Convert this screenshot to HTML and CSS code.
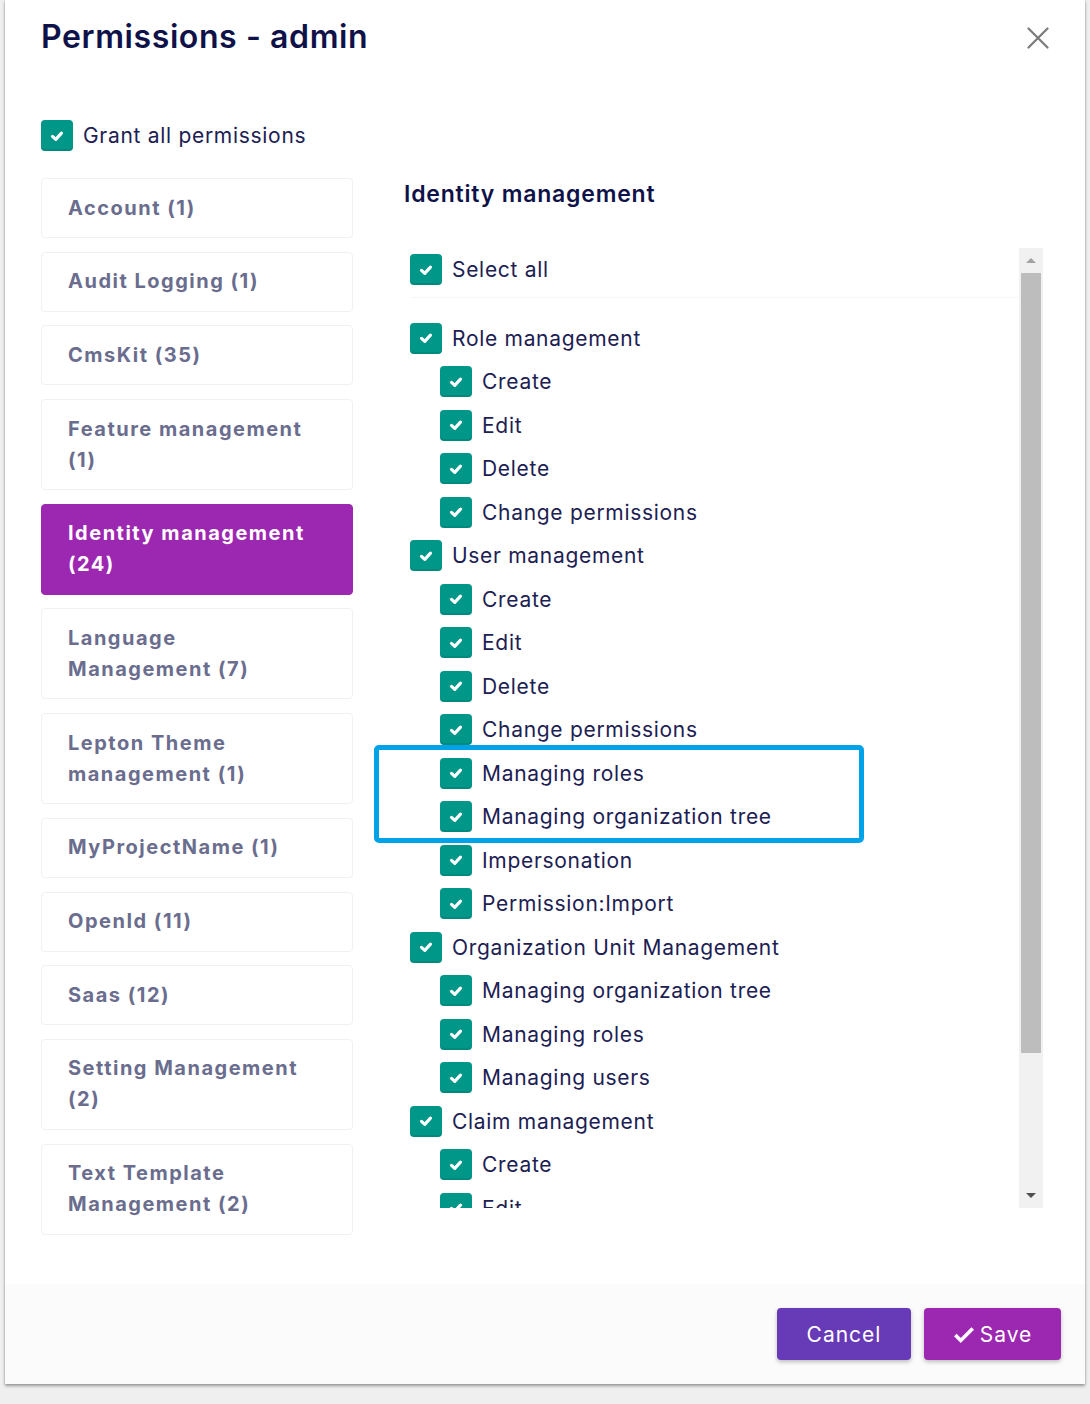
FILE: index.html
```html
<!DOCTYPE html>
<html lang="en">
<head>
<meta charset="utf-8">
<title>Permissions - admin</title>
<link rel="stylesheet" href="styles.css">
</head>
<body>
<div class="modal">
  <div class="modal-header">
    <h1 class="title">Permissions - admin</h1>
    <button class="close" aria-label="Close">
      <svg width="22" height="22" viewBox="0 0 22 22"><path d="M1.5 1.5 L20.5 20.5 M20.5 1.5 L1.5 20.5" stroke="#7a7a7a" stroke-width="2.2" fill="none" stroke-linecap="round"/></svg>
    </button>
  </div>
  <div class="modal-body">
    <label class="row grant"><span class="cb"><svg viewBox="0 0 16 16"><path d="M4 8.3 L6.9 11 L12 5.4" /></svg></span><span class="lbl">Grant all permissions</span></label>
    <div class="columns">
      <nav class="nav">
        <a class="nav-item">Account (1)</a>
        <a class="nav-item">Audit Logging (1)</a>
        <a class="nav-item">CmsKit (35)</a>
        <a class="nav-item">Feature management (1)</a>
        <a class="nav-item active">Identity management (24)</a>
        <a class="nav-item">Language Management (7)</a>
        <a class="nav-item">Lepton Theme management (1)</a>
        <a class="nav-item">MyProjectName (1)</a>
        <a class="nav-item">OpenId (11)</a>
        <a class="nav-item">Saas (12)</a>
        <a class="nav-item">Setting Management (2)</a>
        <a class="nav-item">Text Template Management (2)</a>
      </nav>
      <section class="panel">
        <h2 class="panel-title">Identity management</h2>
        <div class="scroll-box">
          <div class="list">
            <label class="row"><span class="cb"><svg viewBox="0 0 16 16"><path d="M4 8.3 L6.9 11 L12 5.4" /></svg></span><span class="lbl">Select all</span></label>
            <hr class="sep">
            <label class="row"><span class="cb"><svg viewBox="0 0 16 16"><path d="M4 8.3 L6.9 11 L12 5.4" /></svg></span><span class="lbl">Role management</span></label>
            <label class="row child"><span class="cb"><svg viewBox="0 0 16 16"><path d="M4 8.3 L6.9 11 L12 5.4" /></svg></span><span class="lbl">Create</span></label>
            <label class="row child"><span class="cb"><svg viewBox="0 0 16 16"><path d="M4 8.3 L6.9 11 L12 5.4" /></svg></span><span class="lbl">Edit</span></label>
            <label class="row child"><span class="cb"><svg viewBox="0 0 16 16"><path d="M4 8.3 L6.9 11 L12 5.4" /></svg></span><span class="lbl">Delete</span></label>
            <label class="row child"><span class="cb"><svg viewBox="0 0 16 16"><path d="M4 8.3 L6.9 11 L12 5.4" /></svg></span><span class="lbl">Change permissions</span></label>
            <label class="row"><span class="cb"><svg viewBox="0 0 16 16"><path d="M4 8.3 L6.9 11 L12 5.4" /></svg></span><span class="lbl">User management</span></label>
            <label class="row child"><span class="cb"><svg viewBox="0 0 16 16"><path d="M4 8.3 L6.9 11 L12 5.4" /></svg></span><span class="lbl">Create</span></label>
            <label class="row child"><span class="cb"><svg viewBox="0 0 16 16"><path d="M4 8.3 L6.9 11 L12 5.4" /></svg></span><span class="lbl">Edit</span></label>
            <label class="row child"><span class="cb"><svg viewBox="0 0 16 16"><path d="M4 8.3 L6.9 11 L12 5.4" /></svg></span><span class="lbl">Delete</span></label>
            <label class="row child"><span class="cb"><svg viewBox="0 0 16 16"><path d="M4 8.3 L6.9 11 L12 5.4" /></svg></span><span class="lbl">Change permissions</span></label>
            <label class="row child"><span class="cb"><svg viewBox="0 0 16 16"><path d="M4 8.3 L6.9 11 L12 5.4" /></svg></span><span class="lbl">Managing roles</span></label>
            <label class="row child"><span class="cb"><svg viewBox="0 0 16 16"><path d="M4 8.3 L6.9 11 L12 5.4" /></svg></span><span class="lbl">Managing organization tree</span></label>
            <label class="row child"><span class="cb"><svg viewBox="0 0 16 16"><path d="M4 8.3 L6.9 11 L12 5.4" /></svg></span><span class="lbl">Impersonation</span></label>
            <label class="row child"><span class="cb"><svg viewBox="0 0 16 16"><path d="M4 8.3 L6.9 11 L12 5.4" /></svg></span><span class="lbl">Permission:Import</span></label>
            <label class="row"><span class="cb"><svg viewBox="0 0 16 16"><path d="M4 8.3 L6.9 11 L12 5.4" /></svg></span><span class="lbl">Organization Unit Management</span></label>
            <label class="row child"><span class="cb"><svg viewBox="0 0 16 16"><path d="M4 8.3 L6.9 11 L12 5.4" /></svg></span><span class="lbl">Managing organization tree</span></label>
            <label class="row child"><span class="cb"><svg viewBox="0 0 16 16"><path d="M4 8.3 L6.9 11 L12 5.4" /></svg></span><span class="lbl">Managing roles</span></label>
            <label class="row child"><span class="cb"><svg viewBox="0 0 16 16"><path d="M4 8.3 L6.9 11 L12 5.4" /></svg></span><span class="lbl">Managing users</span></label>
            <label class="row"><span class="cb"><svg viewBox="0 0 16 16"><path d="M4 8.3 L6.9 11 L12 5.4" /></svg></span><span class="lbl">Claim management</span></label>
            <label class="row child"><span class="cb"><svg viewBox="0 0 16 16"><path d="M4 8.3 L6.9 11 L12 5.4" /></svg></span><span class="lbl">Create</span></label>
            <label class="row child"><span class="cb"><svg viewBox="0 0 16 16"><path d="M4 8.3 L6.9 11 L12 5.4" /></svg></span><span class="lbl">Edit</span></label>
          </div>
          <div class="scrollbar">
            <div class="sb-btn"><span class="arrow-up"></span></div>
            <div class="sb-track"><div class="sb-thumb"></div></div>
            <div class="sb-btn"><span class="arrow-down"></span></div>
          </div>
        </div>
      </section>
    </div>
  </div>
  <div class="modal-footer">
    <button class="btn btn-cancel">Cancel</button>
    <button class="btn btn-save"><svg class="save-check" viewBox="0 0 24 20"><path d="M2.5 10.5 L8.5 16.5 L21.5 3.5" /></svg>Save</button>
  </div>
  <div class="highlight"></div>
</div>
</body>
</html>
```
FILE: styles.css
```css
html, body {
  margin: 0;
  padding: 0;
}
body {
  background: #efefef;
  font-family: Inter, "Noto Sans", sans-serif;
  height: 1404px;
  overflow: hidden;
}
.modal {
  position: relative;
  margin-left: 5px;
  width: 1080px;
  height: 1384px;
  background: #fff;
  box-shadow: 0 2px 3px rgba(0,0,0,0.35), 0 0 2px rgba(0,0,0,0.15);
  display: flex;
  flex-direction: column;
}
.modal-header {
  display: flex;
  justify-content: space-between;
  align-items: flex-start;
  padding: 16px 36px 0 36px;
  height: 42px;
}
.title {
  margin: 0;
  font-size: 32px;
  line-height: 42px;
  font-weight: 600;
  color: #0f1249;
  letter-spacing: 0.6px;
}
.close {
  border: 0;
  background: transparent;
  padding: 0;
  margin: 11px 0 0 0;
  width: 22px;
  height: 22px;
  display: block;
}
.close svg { display: block; }
.modal-body {
  flex: 1;
  padding: 62px 42px 0 36px;
}
.row {
  display: flex;
  align-items: center;
  height: 43.5px;
  gap: 10px;
}
.row.grant {
  height: 31px;
  margin-bottom: 27px;
}
.cb {
  width: 32px;
  height: 31px;
  border-radius: 4px;
  background: #009688;
  box-shadow: inset 0 -2px 0 rgba(0,0,0,0.08);
  display: flex;
  align-items: center;
  justify-content: center;
  flex: none;
}
.cb svg {
  width: 18px;
  height: 18px;
}
.cb svg path {
  fill: none;
  stroke: #fff;
  stroke-width: 2.8;
  stroke-linecap: round;
  stroke-linejoin: round;
}
.lbl {
  font-size: 21px;
  color: #1c2052;
  letter-spacing: 0.7px;
}
.columns {
  display: flex;
  gap: 51px;
}
.nav {
  width: 312px;
  flex: none;
  display: flex;
  flex-direction: column;
  gap: 13.7px;
}
.nav-item {
  display: block;
  border: 1px solid #f1f1f3;
  border-radius: 4px;
  padding: 13.5px 26px;
  font-size: 20px;
  line-height: 31px;
  font-weight: 700;
  color: #6a6d8e;
  letter-spacing: 1.5px;
}
.nav-item.active {
  background: #9c27b0;
  border-color: #9c27b0;
  color: #fff;
}
.panel {
  flex: 1;
  display: flex;
  flex-direction: column;
}
.panel-title {
  margin: 0 0 38px 0;
  font-size: 23px;
  line-height: 32px;
  font-weight: 600;
  color: #0f1249;
  letter-spacing: 0.8px;
}
.scroll-box {
  display: flex;
  height: 960px;
}
.list {
  flex: 1;
  overflow: hidden;
  padding-left: 6px;
}
.row.child {
  padding-left: 30px;
}
.sep {
  border: 0;
  border-top: 1px solid #f7f7f7;
  margin: 5px 0 19px 0;
}
.scrollbar {
  width: 24px;
  background: #f1f1f1;
  display: flex;
  flex-direction: column;
}
.sb-btn {
  height: 25px;
  display: flex;
  align-items: center;
  justify-content: center;
  flex: none;
}
.sb-track {
  flex: 1;
  padding: 0 2px;
}
.sb-thumb {
  height: 780px;
  background: #bdbdbd;
}
.arrow-up {
  width: 0; height: 0;
  border-left: 5px solid transparent;
  border-right: 5px solid transparent;
  border-bottom: 5px solid #a3a3a3;
}
.arrow-down {
  width: 0; height: 0;
  border-left: 5px solid transparent;
  border-right: 5px solid transparent;
  border-top: 5px solid #505050;
}
.modal-footer {
  height: 100px;
  background: #fbfbfb;
  display: flex;
  justify-content: flex-end;
  align-items: center;
  gap: 13px;
  padding-right: 24px;
}
.btn {
  height: 52px;
  border: 0;
  border-radius: 4px;
  color: #fff;
  font-family: Inter, "Noto Sans", sans-serif;
  font-size: 21px;
  box-shadow: 0 2px 4px rgba(0,0,0,0.25);
  display: flex;
  align-items: center;
  justify-content: center;
  letter-spacing: 1px;
}
.btn-cancel {
  width: 134px;
  background: #673ab7;
}
.btn-save {
  width: 137px;
  background: #9c27b0;
  gap: 5px;
}
.save-check {
  width: 22px;
  height: 19px;
}
.save-check path {
  fill: none;
  stroke: #fff;
  stroke-width: 4;
}
.highlight {
  position: absolute;
  left: 369px;
  top: 745px;
  width: 480px;
  height: 88px;
  border: 5px solid #00a2e8;
  border-radius: 5px;
}
```
